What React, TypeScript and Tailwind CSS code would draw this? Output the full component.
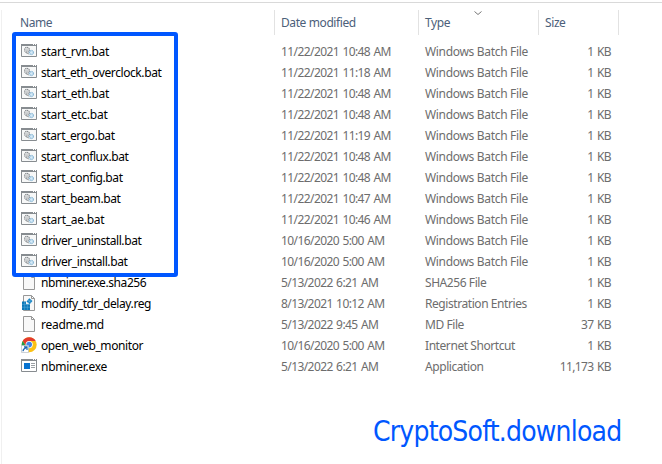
type Kind = 'bat' | 'file' | 'reg' | 'chrome' | 'exe';

interface Entry {
  name: string;
  date: string;
  type: string;
  size: string;
  kind: Kind;
}

const batch = (name: string, date: string): Entry => ({
  name,
  date,
  type: 'Windows Batch File',
  size: '1 KB',
  kind: 'bat',
});

const entries: Entry[] = [
  batch('start_rvn.bat', '11/22/2021 10:48 AM'),
  batch('start_eth_overclock.bat', '11/22/2021 11:18 AM'),
  batch('start_eth.bat', '11/22/2021 10:48 AM'),
  batch('start_etc.bat', '11/22/2021 10:48 AM'),
  batch('start_ergo.bat', '11/22/2021 11:19 AM'),
  batch('start_conflux.bat', '11/22/2021 10:48 AM'),
  batch('start_config.bat', '11/22/2021 10:48 AM'),
  batch('start_beam.bat', '11/22/2021 10:47 AM'),
  batch('start_ae.bat', '11/22/2021 10:46 AM'),
  batch('driver_uninstall.bat', '10/16/2020 5:00 AM'),
  batch('driver_install.bat', '10/16/2020 5:00 AM'),
  { name: 'nbminer.exe.sha256', date: '5/13/2022 6:21 AM', type: 'SHA256 File', size: '1 KB', kind: 'file' },
  { name: 'modify_tdr_delay.reg', date: '8/13/2021 10:12 AM', type: 'Registration Entries', size: '1 KB', kind: 'reg' },
  { name: 'readme.md', date: '5/13/2022 9:45 AM', type: 'MD File', size: '37 KB', kind: 'file' },
  { name: 'open_web_monitor', date: '10/16/2020 5:00 AM', type: 'Internet Shortcut', size: '1 KB', kind: 'chrome' },
  { name: 'nbminer.exe', date: '5/13/2022 6:21 AM', type: 'Application', size: '11,173 KB', kind: 'exe' },
];

function Page() {
  return <path d="M2.5.5h8l3 3v12h-11zM10.5.5v3h3" fill="#f8f8f8" stroke="#979797" />;
}

function FileIcon({ kind }: { kind: Kind }) {
  return (
    <svg className="mb-0.5 h-4 w-4 shrink-0" viewBox="0 0 16 16" fill="none" shapeRendering="geometricPrecision">
      {kind === 'bat' && (
        <>
          <path d="M.5 2.5h15v11H.5z" fill="#f7f8f8" stroke="#878c90" />
          <path d="M0 1h16v2H0z" fill="#878c90" />
          <path d="M12 1.5h1M14 1.5h1" stroke="#fff" />
          <circle cx="6" cy="6.8" r="2.4" stroke="#85898d" strokeWidth="1.3" strokeDasharray="1.2 .5" />
          <circle cx="6" cy="6.8" r="1" stroke="#a9adb0" strokeWidth=".7" />
          <circle cx="10.4" cy="9.5" r="2" fill="#d6ebf8" stroke="#8db9d6" strokeWidth="1.3" strokeDasharray="1.2 .5" />
          <path d="M4.5 9.5 8 11" stroke="#9b9fa2" />
        </>
      )}
      {kind === 'file' && <Page />}
      {kind === 'reg' && (
        <>
          <Page />
          <path d="M1 6.5h4v2.8h4V15H1z" fill="#0b78b8" />
          <path d="m8.3 3.2 3.2 2.8-2.8 3.2-3.2-2.8z" fill="#1683c3" />
          <path d="M1 9.3h8M1 12.2h8M3.7 6.5V15M6.3 9.3V15" stroke="#62b1dc" strokeWidth=".5" />
          <path d="m6.9 4.8 3.2 2.8M9.9 4.6 7.1 7.8" stroke="#83c7e9" strokeWidth=".5" />
        </>
      )}
      {kind === 'chrome' && (
        <>
          <circle cx="8.2" cy="7.8" r="7.5" fill="#fbc116" />
          <path d="M1.7 4A7.5 7.5 0 0 1 14.7 4H8.2L5.2 9.5z" fill="#e33b2e" />
          <path d="M1.7 4 5.2 9.5l3 1.8-2 3.7A7.5 7.5 0 0 1 1.7 4" fill="#249b4b" />
          <circle cx="8.2" cy="7.6" r="3.6" fill="#fff" />
          <circle cx="8.2" cy="7.6" r="2.8" fill="#4285e8" />
          <path d="M.5 8.5h7v7h-7z" fill="#fff" stroke="#b8bec4" strokeWidth=".7" />
          <path d="M2 14.2c0-2 1-2.7 3.5-3.8M3 9.9h3v3" stroke="#1c65b0" strokeWidth="1.2" />
        </>
      )}
      {kind === 'exe' && (
        <>
          <path d="M.5 2.5h15v11H.5z" fill="#fff" stroke="#878c90" />
          <path d="M0 1h16v2H0z" fill="#878c90" />
          <path d="M12 1.5h1M14 1.5h1" stroke="#fff" />
          <path d="M3 5h6v6H3z" fill="#0873d0" />
          <path d="M10 5.5h4M10 7.5h4M10 9.5h4" stroke="#9ba0a4" />
        </>
      )}
    </svg>
  );
}

export default function App() {
  return (
    <div className="relative flex h-[464px] w-[662px] flex-col overflow-hidden bg-white font-['Noto_Sans','Open_Sans',sans-serif] text-[12px] whitespace-nowrap">
      <div className="mt-0.5 h-px shrink-0 bg-[#d9d9d9]" />
      <div className="mt-[7px] ml-px flex grow flex-col border-l border-[#f0f0f0]">
        <header className="flex h-[25px] leading-[26px] tracking-[-0.4px] text-[#4c607a]">
          <div className="w-[273px] border-r border-[#e2e2e2] pl-[18px]">Name</div>
          <div className="w-36 border-r border-[#e2e2e2] pl-1.5">Date modified</div>
          <div className="flex w-[120px] border-r border-[#e2e2e2] pl-1.5">
            <span className="w-[49px]">Type</span>
            <svg className="mt-px h-[5px] w-2" viewBox="0 0 8 5" fill="none">
              <path d="m.5.5 3.5 3 3.5-3" stroke="#777" />
            </svg>
          </div>
          <div className="w-20 border-r border-[#e2e2e2] pl-1.5">Size</div>
        </header>
        <main className="mt-1.5">
          {entries.map((entry) => (
            <div key={entry.name} className="flex h-[21px] items-center leading-[21px] text-[#6d6d6d]">
              <div className={`flex w-[279px] items-center gap-1 pl-[19px] text-black ${entry.name.length < 14 ? 'tracking-[-0.27px]' : 'tracking-[-0.41px]'}`}>
                <FileIcon kind={entry.kind} />
                <span>{entry.name}</span>
              </div>
              <span className="w-36 tracking-[-0.58px] [word-spacing:0.8px]">{entry.date}</span>
              <span className={entry.kind === 'bat' ? 'w-[106px] tracking-[-0.32px]' : 'w-[106px] tracking-[-0.43px]'}>
                {entry.type}
              </span>
              <span className="w-20 text-right tracking-[-0.62px] [word-spacing:0.9px]">{entry.size}</span>
            </div>
          ))}
        </main>
        <footer className="mt-9 pl-[371px] font-['DejaVu_Sans_Condensed','DejaVu_Sans',sans-serif] text-[28px] leading-[38px] tracking-[-0.8px] text-[#0057ff]">
          CryptoSoft.download
        </footer>
      </div>
      <div className="absolute top-8 left-3 h-[245px] w-[166px] rounded-[3px] border-4 border-[#0057ff]" />
    </div>
  );
}
